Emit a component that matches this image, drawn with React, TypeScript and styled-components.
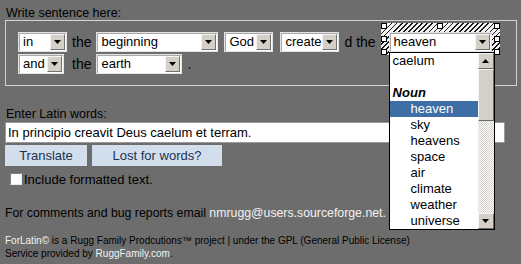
import React from "react";
import styled, { createGlobalStyle } from "styled-components";

const GlobalStyle = createGlobalStyle`
  body {
    margin: 0;
    background: #6d6d6d;
    font-family: "Liberation Sans", Arial, sans-serif;
    font-size: 13px;
    color: #000;
  }
`;

type Pos = "start" | "mid" | "end";

const nounWords = ["sky", "heavens", "space", "air", "climate", "weather", "universe"];

const DownArrow = () => (
  <svg width="7" height="4" viewBox="0 0 7 4">
    <polygon points="0,0 7,0 3.5,4" fill="#000" />
  </svg>
);

const UpArrow = () => (
  <svg width="7" height="4" viewBox="0 0 7 4">
    <polygon points="0,4 7,4 3.5,0" fill="#000" />
  </svg>
);

const Select = ({ value, w, ml }: { value: string; w: number; ml?: number }) => (
  <SelectBox $w={w} $ml={ml || 0}>
    <SelectText>{value}</SelectText>
    <ArrowButton>
      <DownArrow />
    </ArrowButton>
  </SelectBox>
);

const App = () => {
  const handles: [Pos, Pos][] = [
    ["start", "start"],
    ["mid", "start"],
    ["end", "start"],
    ["start", "mid"],
    ["end", "mid"],
    ["start", "end"],
    ["end", "end"],
  ];

  return (
    <Page>
      <GlobalStyle />
      <Label>Write sentence here:</Label>
      <SentenceBox>
        <Row>
          <Select value="in" w={49} />
          <Word>the</Word>
          <Select value="beginning" w={122} />
          <Select value="God" w={49} ml={6} />
          <Select value="create" w={59} ml={7} />
          <Word>d the</Word>
          <EditedSelect>
            <Hatch>
              {handles.map(([x, y], i) => (
                <Handle key={i} $x={x} $y={y} />
              ))}
            </Hatch>
            <SelectBox $w={103} $ml={0} $raised>
              <SelectText>heaven</SelectText>
              <ArrowButton>
                <DownArrow />
              </ArrowButton>
              <DropList>
                <Options>
                  <Option>caelum</Option>
                  <Option> </Option>
                  <GroupLabel>Noun</GroupLabel>
                  <Option $indent $selected>
                    heaven
                  </Option>
                  {nounWords.map((word) => (
                    <Option key={word} $indent>
                      {word}
                    </Option>
                  ))}
                </Options>
                <ScrollBar>
                  <ScrollButton>
                    <UpArrow />
                  </ScrollButton>
                  <Thumb />
                  <Track />
                  <ScrollButton>
                    <DownArrow />
                  </ScrollButton>
                </ScrollBar>
              </DropList>
            </SelectBox>
          </EditedSelect>
        </Row>
        <Row>
          <Select value="and" w={46} />
          <Word $ml={8}>the</Word>
          <Select value="earth" w={86} />
          <Word>.</Word>
        </Row>
      </SentenceBox>

      <Label $mt={21}>Enter Latin words:</Label>
      <LatinInput>In principio creavit Deus caelum et terram.</LatinInput>
      <ButtonRow>
        <ActionButton $w={82}>Translate</ActionButton>
        <ActionButton $w={130}>Lost for words?</ActionButton>
      </ButtonRow>
      <CheckRow>
        <CheckBox />
        <span>Include formatted text.</span>
      </CheckRow>

      <Contact>
        For comments and bug reports email{" "}
        <LightText>nmrugg@users.sourceforge.net.</LightText>
      </Contact>

      <Footer>
        <div>
          <LightText>ForLatin©</LightText> is a Rugg Family Prodcutions™ project | under the GPL
          (General Public License)
        </div>
        <div>
          Service provided by <LightText>RuggFamily.com</LightText>.
        </div>
      </Footer>
    </Page>
  );
};

export default App;

const Page = styled.div`
  position: relative;
  width: 521px;
  height: 264px;
  box-sizing: border-box;
  padding: 0 5px;
  overflow: hidden;
`;

const Label = styled.div<{ $mt?: number }>`
  margin-top: ${(p) => p.$mt ?? 6}px;
  padding-left: 1px;
  line-height: 14px;
  font-size: 12.5px;
`;

const SentenceBox = styled.div`
  width: 512px;
  box-sizing: border-box;
  border: 1px solid #d2d2d2;
  padding: 11px 12px 11px 12px;
  display: flex;
  flex-direction: column;
  gap: 2px;
`;

const Row = styled.div`
  display: flex;
  align-items: center;
  height: 20px;
`;

const Word = styled.span<{ $ml?: number }>`
  margin: 0 5px 0 ${(p) => p.$ml ?? 5}px;
  font-size: 14px;
  line-height: 20px;
  white-space: nowrap;
`;

const SelectBox = styled.span<{ $w: number; $ml: number; $raised?: boolean }>`
  position: relative;
  z-index: ${(p) => (p.$raised ? 2 : "auto")};
  display: inline-flex;
  align-items: center;
  width: ${(p) => p.$w}px;
  height: 20px;
  margin-left: ${(p) => p.$ml}px;
  box-sizing: border-box;
  background: #fff;
  border: 1px solid #e4e4e4;
  box-shadow: inset 1px 1px 0 #a8a8a8;
  padding: 1px 1px 1px 4px;
`;

const SelectText = styled.span`
  flex: 1;
  font-size: 13px;
  line-height: 18px;
  white-space: nowrap;
  overflow: hidden;
`;

const ArrowButton = styled.span`
  display: flex;
  flex-shrink: 0;
  align-items: center;
  justify-content: center;
  width: 15px;
  height: 16px;
  box-sizing: border-box;
  background: #d4d0c8;
  border: 1px solid;
  border-color: #f4f4f4 #707070 #707070 #f4f4f4;
`;

const EditedSelect = styled.span`
  position: relative;
  display: inline-flex;
  margin-left: 8px;
`;

const Hatch = styled.span`
  position: absolute;
  top: -9px;
  left: -8px;
  right: -8px;
  bottom: -3px;
  z-index: 1;
  background: repeating-linear-gradient(135deg, #1a1a1a 0 1.2px, #f2f2f2 1.2px 3.6px);
`;

const handleOffset = (pos: Pos) =>
  pos === "start" ? "0" : pos === "mid" ? "calc(50% - 3px)" : "calc(100% - 6px)";

const Handle = styled.span<{ $x: Pos; $y: Pos }>`
  position: absolute;
  left: ${(p) => handleOffset(p.$x)};
  top: ${(p) => handleOffset(p.$y)};
  width: 6px;
  height: 6px;
  box-sizing: border-box;
  background: #fff;
  border: 1px solid #000;
`;

const DropList = styled.div`
  position: absolute;
  top: 19px;
  left: -1px;
  z-index: 3;
  width: 106px;
  height: 178px;
  box-sizing: border-box;
  display: flex;
  background: #fff;
  border: 1px solid #000;
`;

const Options = styled.div`
  flex: 1;
  display: flex;
  flex-direction: column;
  overflow: hidden;
`;

const Option = styled.div<{ $indent?: boolean; $selected?: boolean }>`
  height: 16px;
  line-height: 16px;
  font-size: 13px;
  padding-left: ${(p) => (p.$indent ? 21 : 3)}px;
  white-space: pre;
  background: ${(p) => (p.$selected ? "#3d6ea6" : "transparent")};
  color: ${(p) => (p.$selected ? "#fff" : "#000")};
`;

const GroupLabel = styled(Option)`
  font-weight: bold;
  font-style: italic;
`;

const ScrollBar = styled.div`
  width: 16px;
  display: flex;
  flex-direction: column;
`;

const ScrollButton = styled.div`
  display: flex;
  align-items: center;
  justify-content: center;
  height: 16px;
  box-sizing: border-box;
  background: #d4d0c8;
  border: 1px solid;
  border-color: #f4f4f4 #6a6a6a #6a6a6a #f4f4f4;
`;

const Thumb = styled.div`
  height: 52px;
  box-sizing: border-box;
  background: #d4d0c8;
  border: 1px solid;
  border-color: #f4f4f4 #6a6a6a #6a6a6a #f4f4f4;
`;

const Track = styled.div`
  flex: 1;
  background: repeating-conic-gradient(#d4d0c8 0 25%, #ffffff 0 50%) 0 0 / 2px 2px;
`;

const LatinInput = styled.div`
  margin-top: 1px;
  width: 500px;
  height: 21px;
  box-sizing: border-box;
  background: #fff;
  border: 1px solid #9a9a9a;
  padding-left: 2px;
  font-size: 13px;
  line-height: 19px;
  white-space: nowrap;
`;

const ButtonRow = styled.div`
  display: flex;
  gap: 5px;
  margin-top: 2px;
`;

const ActionButton = styled.div<{ $w: number }>`
  width: ${(p) => p.$w}px;
  height: 21px;
  display: flex;
  align-items: center;
  justify-content: center;
  background: #d3deec;
  color: #1c3152;
  font-size: 13px;
`;

const CheckRow = styled.div`
  display: flex;
  align-items: center;
  gap: 2px;
  margin-top: 6px;
  padding-left: 5px;
  height: 14px;
  font-size: 13px;
`;

const CheckBox = styled.span`
  width: 12px;
  height: 12px;
  box-sizing: border-box;
  background: #fff;
  border: 1px solid;
  border-color: #808080 #e8e8e8 #e8e8e8 #808080;
`;

const Contact = styled.div`
  margin-top: 19px;
  line-height: 16px;
  font-size: 12.3px;
  white-space: nowrap;
`;

const LightText = styled.span`
  color: #f2f2f2;
`;

const Footer = styled.div`
  margin-top: 13px;
  font-size: 10px;
  line-height: 13px;
  white-space: nowrap;
`;
